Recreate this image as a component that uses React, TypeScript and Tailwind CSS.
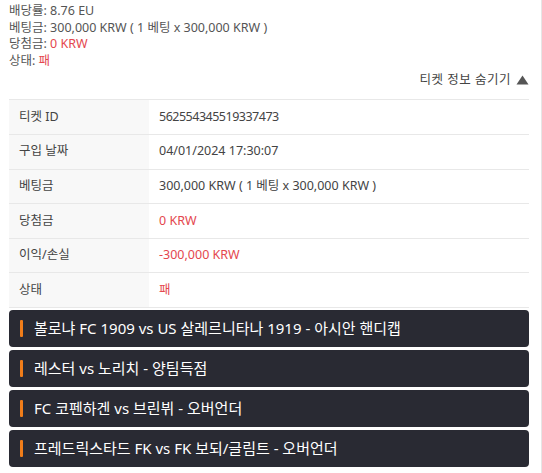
import React from "react";

const rows: { label: string; value: string; red?: boolean }[] = [
  { label: "티켓 ID", value: "562554345519337473" },
  { label: "구입 날짜", value: "04/01/2024 17:30:07" },
  { label: "베팅금", value: "300,000 KRW ( 1 베팅 x 300,000 KRW )" },
  { label: "당첨금", value: "0 KRW", red: true },
  { label: "이익/손실", value: "-300,000 KRW", red: true },
  { label: "상태", value: "패", red: true },
];

const matches = [
  "볼로냐 FC 1909 vs US 살레르니타나 1919 - 아시안 핸디캡",
  "레스터 vs 노리치 - 양팀득점",
  "FC 코펜하겐 vs 브린뷔 - 오버언더",
  "프레드릭스타드 FK vs FK 보되/글림트 - 오버언더",
];

export default function App() {
  return (
    <div
      className="w-[542px] h-[473px] overflow-hidden bg-white border-r border-[#e6e6e6]"
      style={{ fontFamily: '"Noto Sans", "Noto Sans CJK KR", sans-serif' }}
    >
      <div className="pl-[9px] pr-[12px] pt-[3px]">
        {/* summary */}
        <div className="text-[12.5px] leading-[16.6px] text-[#555]">
          <div>배당률: 8.76 EU</div>
          <div>베팅금: 300,000 KRW ( 1 베팅 x 300,000 KRW )</div>
          <div>
            당첨금: <span className="text-[#e4474e]">0 KRW</span>
          </div>
          <div>
            상태: <span className="text-[#e4474e]">패</span>
          </div>
        </div>

        <div className="flex justify-end items-center gap-[5px] mt-[1px] h-[20px] text-[12.5px] text-[#444]">
          <span className="tracking-[0.5px]">티켓 정보 숨기기</span>
          <svg width="13" height="10" viewBox="0 0 13 10">
            <path d="M6.5 0.5 L12.5 9.5 L0.5 9.5 Z" fill="#555" />
          </svg>
        </div>

        {/* ticket details */}
        <div className="mt-[9px] border-t border-[#e8e8e8]">
          {rows.map((r) => (
            <div key={r.label} className="flex h-[34.6px] border-b border-[#e8e8e8] text-[12.5px]">
              <div className="w-[140px] shrink-0 bg-[#f8f8f8] pl-[10px] flex items-center text-[#444]">{r.label}</div>
              <div
                className={`pl-[10px] flex items-center ${r.red ? "text-[#e4474e]" : "text-[#444]"} ${
                  r.label === "티켓 ID" ? "tracking-[-0.5px]" : ""
                }`}
              >
                {r.value}
              </div>
            </div>
          ))}
        </div>

        {/* selections */}
        <div className="mt-[2px] flex flex-col gap-[3px]">
          {matches.map((m) => (
            <div key={m} className="h-[37px] rounded-[4px] bg-[#292a33] flex items-center pl-[11px]">
              <span className="w-[3px] h-[17px] rounded-[1px] bg-[#f07d1a]" />
              <span className="ml-[11px] text-white text-[15px]">{m}</span>
            </div>
          ))}
        </div>
      </div>
    </div>
  );
}
